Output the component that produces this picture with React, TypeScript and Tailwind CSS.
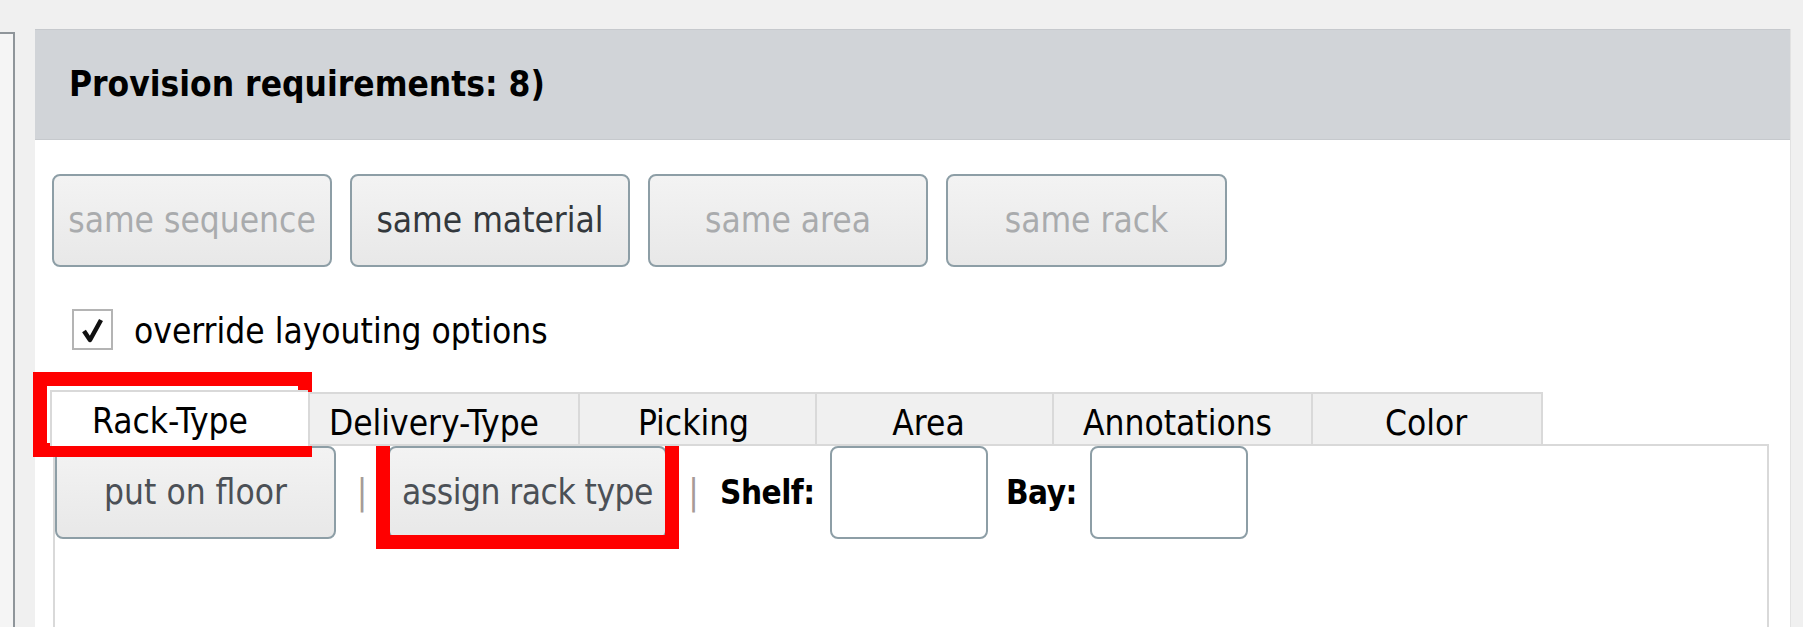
import React, { useState } from 'react';

const tabs = [
  { id: 'rack', label: 'Rack-Type', w: 'w-[258px] pr-[20px]' },
  { id: 'delivery', label: 'Delivery-Type', w: 'w-[270px] pr-[20px]' },
  { id: 'picking', label: 'Picking', w: 'w-[237px] pr-[8px]' },
  { id: 'area', label: 'Area', w: 'w-[237px] pr-[12px]' },
  { id: 'annotations', label: 'Annotations', w: 'w-[259px] pr-[10px]' },
  { id: 'color', label: 'Color', w: 'w-[232px] pr-[2px]' },
];

function ActionButton({ label, disabled, className = '' }: { label: string; disabled?: boolean; className?: string }) {
  return (
    <button
      type="button"
      disabled={disabled}
      className={`h-[93px] shrink-0 rounded-[8px] border-2 border-[#8d9ea6] bg-linear-to-b from-[#f3f3f3] to-[#e8e8e8] text-[35px] leading-none ${
        disabled ? 'text-[#a9abad]' : 'text-[#33383c]'
      } ${className}`}
    >
      {label}
    </button>
  );
}

export default function App() {
  const [override, setOverride] = useState(true);
  const [active, setActive] = useState('rack');

  return (
    <div className="relative flex h-[627px] w-[1803px] overflow-hidden bg-[#f0f0f0] font-['DejaVu_Sans_Condensed','DejaVu_Sans',sans-serif] text-black">
      {/* left neighbour panel */}
      <div className="mt-[32px] w-[15px] shrink-0 border-t-2 border-r-2 border-[#8f959a] bg-[#f5f5f5]" />

      {/* main panel */}
      <div className="mt-[29px] ml-[20px] flex w-[1755px] shrink-0 flex-col bg-white shadow-[1px_0_0_#e2e2e2]">
        <div className="flex h-[111px] shrink-0 items-center border-y border-[#c6c9cd] bg-[#d1d4d8] pl-[34px]">
          <h2 className="text-[35px] font-bold leading-none">Provision requirements: 8)</h2>
        </div>

        <div className="flex flex-col pl-[17px] pt-[34px]">
          {/* grouping buttons */}
          <div className="flex gap-[18px]">
            <ActionButton label="same sequence" disabled className="w-[280px]" />
            <ActionButton label="same material" className="w-[280px]" />
            <ActionButton label="same area" disabled className="w-[280px]" />
            <ActionButton label="same rack" disabled className="w-[281px]" />
          </div>

          {/* override checkbox */}
          <label className="mt-[42px] ml-[20px] flex cursor-pointer items-center gap-[21px]" onClick={() => setOverride(!override)}>
            <span className="flex h-[41px] w-[41px] items-center justify-center border-2 border-[#b4b4b4] bg-white">
              {override && (
                <svg width="24" height="26" viewBox="0 0 24 26">
                  <path d="M3 14 L9 23 L20 3" fill="none" stroke="#111" strokeWidth="4.5" strokeLinejoin="round" />
                </svg>
              )}
            </span>
            <span className="pt-[4px] text-[35px] leading-none">override layouting options</span>
          </label>

          {/* tab widget */}
          <div className="mt-[40px] ml-[1px] flex w-[1716px] flex-col">
            <div className="relative z-10 -mb-[2px] -ml-[3px] flex items-end">
              {tabs.map((t, i) => {
                const sel = active === t.id;
                return (
                  <button
                    key={t.id}
                    type="button"
                    onClick={() => setActive(t.id)}
                    className={`${t.w} flex items-center justify-center border-t-2 border-l-2 border-[#d9d9d9] text-[35px] leading-none ${
                      sel ? 'h-[56px] bg-white pt-[5px]' : 'h-[54px] border-b-2 bg-[#f0f0f0] pt-[9px]'
                    } ${i === tabs.length - 1 ? 'border-r-2' : ''}`}
                  >
                    {t.label}
                  </button>
                );
              })}
            </div>
            <div className="h-[200px] border-2 border-[#d9d9d9] bg-white">
              <div className="flex items-center">
                <ActionButton label="put on floor" className="w-[281px] !text-[#4b5056]" />
                <span className="w-[52px] text-center text-[35px] leading-none text-[#a69b98]">|</span>
                <ActionButton label="assign rack type" className="w-[279px] tracking-[-0.5px] !text-[#4b5056]" />
                <span className="w-[53px] text-center text-[35px] leading-none text-[#a69b98]">|</span>
                <span className="w-[110px] text-[33px] font-bold leading-none tracking-[-0.5px]">Shelf:</span>
                <input className="h-[93px] w-[158px] rounded-[8px] border-2 border-[#8d9ea6] bg-white px-2 text-[35px] outline-none" />
                <span className="w-[102px] pl-[18px] text-[33px] font-bold leading-none tracking-[-0.5px]">Bay:</span>
                <input className="h-[93px] w-[158px] rounded-[8px] border-2 border-[#8d9ea6] bg-white px-2 text-[35px] outline-none" />
              </div>
            </div>
          </div>
        </div>
      </div>

      {/* red highlight annotations */}
      <div className="pointer-events-none absolute left-[33px] top-[372px] h-[85px] w-[279px] border-[14px] border-[#ff0000]" />
      <div className="pointer-events-none absolute left-[376px] top-[430px] h-[119px] w-[303px] border-[14px] border-[#ff0000]" />
    </div>
  );
}
